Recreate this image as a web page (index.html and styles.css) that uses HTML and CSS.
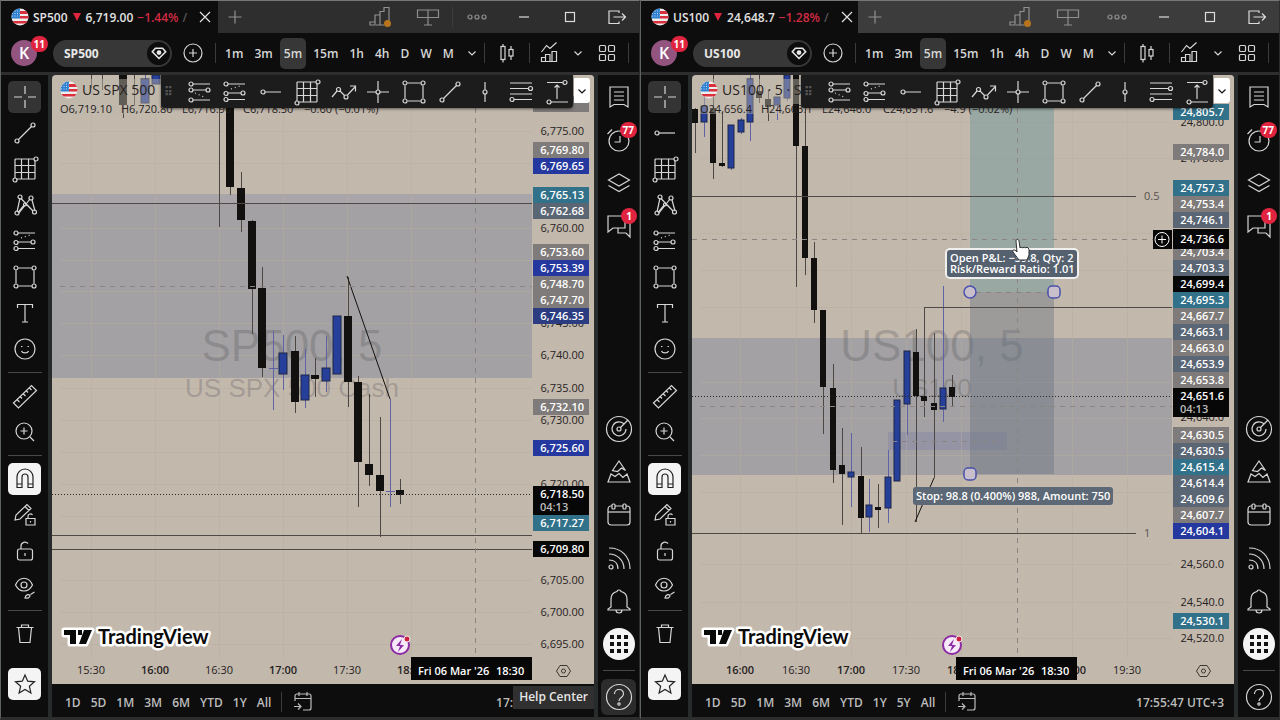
FILE: index.html
```html
<!DOCTYPE html>
<html lang="en">
<head>
    <meta charset="UTF-8">
    <meta name="viewport" content="width=device-width, initial-scale=1.0">
    <title>SP500 / US100</title>
    <link rel="stylesheet" href="styles.css">
</head>
<body>
    <svg class="sprite" aria-hidden="true">
        <symbol id="cross" viewBox="0 0 28 28"><path d="M14 3v8M14 17v8M3 14h8M17 14h8"/></symbol>
        <symbol id="trend" viewBox="0 0 28 28"><circle cx="6" cy="22" r="2"/><circle cx="22" cy="6" r="2"/><path d="M7.5 20.5l13-13"/></symbol>
        <symbol id="hray" viewBox="0 0 28 28"><circle cx="6" cy="14" r="2"/><path d="M8 14h16"/></symbol>
        <symbol id="gann" viewBox="0 0 28 28"><path d="M4 4h19M4 4v19M5 24h19M24 6v18M4 10.500h20M4 17.500h20M10.500 4v20M17.500 4v20"/><circle cx="25" cy="4" r="2"/><circle cx="4" cy="25" r="2"/></symbol>
        <symbol id="pattern" viewBox="0 0 28 28"><path d="M6 21L9 7M10 7.500L22 20M8 22L19 8M21 9l3 11M7 21.500L13 14M15 13l7 7"/><circle cx="9" cy="6" r="2"/><circle cx="20" cy="7" r="2"/><circle cx="6" cy="22" r="2"/><circle cx="23.500" cy="21" r="2"/><circle cx="14" cy="13.500" r="1.500"/></symbol>
        <symbol id="fib" viewBox="0 0 28 28"><circle cx="5" cy="6" r="2"/><path d="M7 6h17M7 15h13M7 21.500h17"/><circle cx="22" cy="15" r="2"/><circle cx="5" cy="15.500" r="2"/><circle cx="5" cy="21.500" r="2"/><path d="M10 11l9-3" stroke-dasharray="1 3"/></symbol>
        <symbol id="fibret" viewBox="0 0 28 28"><circle cx="5" cy="6" r="2"/><circle cx="5" cy="12" r="2"/><circle cx="22" cy="12" r="2"/><circle cx="5" cy="22" r="2"/><path d="M7 6h17M7 12h13M7 22h17"/><path d="M9 15l9 4" stroke-dasharray="1 3"/></symbol>
        <symbol id="box" viewBox="0 0 28 28"><path d="M7.500 5h13M7.500 23h13M5 7.500v13M23 7.500v13"/><circle cx="5" cy="5" r="2"/><circle cx="23" cy="5" r="2"/><circle cx="5" cy="23" r="2"/><circle cx="23" cy="23" r="2"/></symbol>
        <symbol id="type" viewBox="0 0 28 28"><path d="M6.500 9V5.500h15V9M14 5.500V23M11 23h6"/></symbol>
        <symbol id="smile" viewBox="0 0 28 28"><circle cx="14" cy="14" r="10"/><path d="M10 11.500h1.500M16.500 11.500H18M10.500 16c1 2.500 6 2.500 7 0"/></symbol>
        <symbol id="ruler" viewBox="0 0 28 28"><path d="M2.500 21L20.500 3.500l5 5L7.500 26zM6 17.500l2.500 2.500M9 14.500l2 2M12 11.500l2.500 2.500M15 8.500l2 2M18 5.500l2.500 2.500"/></symbol>
        <symbol id="zoomin" viewBox="0 0 28 28"><circle cx="13" cy="13" r="8"/><path d="M19 19l4 4M13 9.500v7M9.500 13h7"/></symbol>
        <symbol id="magnet" viewBox="0 0 28 28"><path d="M6 22.500V12a8 8 0 0 1 16 0v10.500h-5V12a3 3 0 0 0-6 0v10.500zM6 19h5M17 19h5"/></symbol>
        <symbol id="pencil" viewBox="0 0 28 28"><path d="M4 19l1-5L16 3.500l4 4L9 18zM14 5.500l4 4"/><path d="M15 17.500h9v6.500h-9zM17 17.500v-2.500a2.500 2.500 0 0 1 4.500-1M19.500 20v1.500"/></symbol>
        <symbol id="lock" viewBox="0 0 28 28"><rect x="6.500" y="12" width="15" height="11" rx="2"/><path d="M10 12V9a4 4 0 0 1 7-2.500M14 16v3" /></symbol>
        <symbol id="eye" viewBox="0 0 28 28"><path d="M4.500 12c4-9 13-9 17 0-4 8-13 8-17 0z"/><circle cx="13" cy="12" r="3"/><path d="M14 25c1-4 4-4 5-2.500 0 2-2 3-5 2.500zM19.500 21.500l4-2.500"/></symbol>
        <symbol id="trash" viewBox="0 0 28 28"><path d="M5.500 7.500h17M10.500 7V5h7v2M7.500 7.500l1.500 15h10l1.500-15"/></symbol>
        <symbol id="star" viewBox="0 0 28 28"><path d="M14 5l2.700 6.200 6.800.6-5.100 4.500 1.500 6.700L14 19.500 8.100 23l1.500-6.700-5.100-4.500 6.800-.6z"/></symbol>
        <symbol id="wave" viewBox="0 0 28 28"><path d="M3 19l5-6M11 13l5 5M18.500 17L26 9M21 8h5.500v5.500"/><circle cx="9.500" cy="11.500" r="2"/><circle cx="17" cy="19" r="2"/></symbol>
        <symbol id="crossline" viewBox="0 0 28 28"><path d="M14 3v9M14 16v9M3 14h9M16 14h9"/><circle cx="14" cy="14" r="2"/></symbol>
        <symbol id="vline" viewBox="0 0 28 28"><path d="M14 4v8M14 16v8"/><circle cx="14" cy="14" r="2"/></symbol>
        <symbol id="channel" viewBox="0 0 28 28"><path d="M3 5h22M3 10.500h18M3 16h22M7 21.500h18"/><circle cx="23.500" cy="10.500" r="2"/><circle cx="5" cy="21.500" r="2"/></symbol>
        <symbol id="range" viewBox="0 0 28 28"><path d="M4 4.500h16M8 24h17M14 8v13M11.500 9.500L14 7l2.500 2.500"/><circle cx="22" cy="4.500" r="2"/><circle cx="6" cy="24" r="2"/></symbol>
        <symbol id="watch" viewBox="0 0 28 28"><path d="M5 4h18v20l-4-2.500h-10L5 24zM9 9h10M9 13h10M9 17h10"/></symbol>
        <symbol id="alarm" viewBox="0 0 28 28"><circle cx="14" cy="15" r="10"/><path d="M15 10v6H9.500M2.500 8L7 3.500"/></symbol>
        <symbol id="layers" viewBox="0 0 28 28"><path d="M3.500 11L14 5l10.500 6L14 17zM3.500 16.500L14 22.500l10.500-6"/></symbol>
        <symbol id="chat" viewBox="0 0 28 28"><path d="M3 4h17v12H8l-5 4zM20 8h5v17l-4-4h-8v-5"/></symbol>
        <symbol id="radar" viewBox="0 0 28 28"><circle cx="14" cy="14" r="12.500"/><path d="M19.500 9.500a7 7 0 1 0 1.500 4.500M15 13l8-8"/><circle cx="14" cy="14" r="2"/></symbol>
        <symbol id="peak" viewBox="0 0 28 28"><path d="M7.500 12.500L14 3l6.500 9.500-4-2.500-4 3.500zM6 16L3 24h22l-3-8-4 3.500-4-4-4 3z"/></symbol>
        <symbol id="calendar" viewBox="0 0 28 28"><rect x="3" y="5" width="22" height="19" rx="3"/><path d="M3 11h22"/><rect class="peg" x="7" y="3" width="3" height="5" rx="1"/><rect class="peg" x="18" y="3" width="3" height="5" rx="1"/></symbol>
        <symbol id="feed" viewBox="0 0 28 28"><circle cx="6" cy="23" r="2"/><path d="M4 16c5 0 9 3 9 9M4 10c8 0 15 6 15 15M4 4c12 0 21 8 21 21"/></symbol>
        <symbol id="bell" viewBox="0 0 28 28"><path d="M6 20v-8c0-5 4-7 6-7.500 0-2 4-2 4 0 2 .5 6 2.500 6 7.500v8l3 2v1H3v-1zM11 23c0 4 6 4 6 0"/></symbol>
        <symbol id="help" viewBox="0 0 28 28"><circle cx="14" cy="14" r="12.500"/><path d="M9.500 11c0-6 9-6 9 0 0 3.500-4.500 3.500-4.500 7"/><circle cx="14" cy="21" r="1.200"/></symbol>
        <symbol id="plus" viewBox="0 0 28 28"><path d="M14 7.500v13M7.500 14h13"/></symbol>
        <symbol id="pluscircle" viewBox="0 0 28 28"><circle cx="14" cy="14" r="9"/><path d="M14 10v8M10 14h8"/></symbol>
        <symbol id="close" viewBox="0 0 28 28"><path d="M9 9l10 10M19 9L9 19"/></symbol>
        <symbol id="stairs" viewBox="0 0 28 28"><path d="M4 22v-3h5v3zM9 20v-8h5v10h-4M14 13V8.500h4v-4h5V20h-3M14 22h4"/><circle class="dot" cx="21.500" cy="20.500" r="3.500"/></symbol>
        <symbol id="desk" viewBox="0 0 28 28"><path d="M3.500 7h21v7.500h-21zM14 7v15M10 22h8"/></symbol>
        <symbol id="dots" viewBox="0 0 28 28"><circle cx="7" cy="14" r="2"/><circle cx="14" cy="14" r="2"/><circle cx="21" cy="14" r="2"/></symbol>
        <symbol id="min" viewBox="0 0 28 28"><path d="M9 14h10"/></symbol>
        <symbol id="max" viewBox="0 0 28 28"><rect x="9.500" y="9.500" width="9" height="9"/></symbol>
        <symbol id="exit" viewBox="0 0 28 28"><path d="M17 10V8H7v12.500h10v-2M11.500 14H23M20 10.500l3.500 3.500-3.500 3.500"/></symbol>
        <symbol id="down" viewBox="0 0 28 28"><path d="M10.500 12.500L14 16l3.500-3.500"/></symbol>
        <symbol id="bars" viewBox="0 0 28 28"><rect x="8" y="7.500" width="4" height="13"/><rect x="16" y="10.500" width="4" height="6.500"/><path d="M10 5v2.500M10 20.500v3M18 7v3.500M18 17v4"/></symbol>
        <symbol id="indicators" viewBox="0 0 28 28"><path d="M6.500 13l5-6.500 3.500 3 6.500-6M6.500 22.500v-4h4v4zM10.500 22.500v-7h4.500v7zM17 22.500v-10h4.500v10zM6.500 22.500h15"/></symbol>
        <symbol id="layout" viewBox="0 0 28 28"><rect x="6.500" y="6.500" width="6" height="6" rx="1"/><rect x="15.500" y="6.500" width="6" height="6" rx="1"/><rect x="6.500" y="15.500" width="6" height="6" rx="1"/><rect x="15.500" y="15.500" width="6" height="6" rx="1"/></symbol>
        <symbol id="goto" viewBox="0 0 28 28"><path d="M6 13V8a2 2 0 0 1 2-2h12a2 2 0 0 1 2 2v12a2 2 0 0 1-2 2h-6M6 10.500h16M10 4v4M18 4v4M5 18.500h7M9 15.500l3 3-3 3"/></symbol>
        <symbol id="gem" viewBox="0 0 28 28"><path d="M9.500 8h9l4 4.500L14 21l-8.500-8.500z"/><circle class="solid" cx="14" cy="13.500" r="3"/></symbol>
        <symbol id="flag" viewBox="0 0 18 18">
            <clipPath id="round"><circle cx="9" cy="9" r="8.500"/></clipPath>
            <g clip-path="url(#round)" stroke="none">
                <path fill="#f0eded" d="M0 0h18v18H0z"/>
                <path fill="#d8303c" d="M9 3h9v3H9zM9 8h9v2.500H9zM0 13h18v2.500H0z"/>
                <path fill="#2f7fd0" d="M0 0h9v10.500H0z"/>
                <path stroke="#bfe0fa" stroke-dasharray="1 1.500" d="M1 3h8M1 5.500h8M1 8h8"/>
            </g>
        </symbol>
    </svg>

    <main class="desktop" id="desktop"></main>
    <script src="app.js"></script>
</body>
</html>
```
FILE: styles.css
```css
* { box-sizing: border-box; }

body {
    margin: 0;
    background: #2a2a2a;
    color: #d6d6d6;
    font-family: "Open Sans", "Noto Sans", sans-serif;
    font-size: 12px;
    font-weight: 600;
}

button {
    display: inline-flex;
    align-items: center;
    justify-content: center;
    flex: none;
    padding: 0;
    border: 0;
    background: none;
    color: inherit;
    font: inherit;
}

.sprite { position: absolute; width: 0; height: 0; }

.icon {
    display: block;
    flex: none;
    width: 28px;
    height: 28px;
    fill: none;
    stroke: currentColor;
    stroke-width: 1.2;
}
.icon.flag { width: 18px; height: 18px; }
.peg { fill: #0d0d0d; }
.solid { fill: currentColor; stroke: none; }
.dot { fill: #b8741c; stroke: none; }

.desktop {
    display: grid;
    grid-template-columns: 1fr 1fr;
    height: 100vh;
    min-height: 640px;
}

.window {
    display: flex;
    flex-direction: column;
    min-width: 0;
    border: 1px solid #2d2d2d;
    border-top-color: #777;
    border-left-color: #5c6162;
    border-bottom-width: 3px;
    background: #0d0d0d;
}

/* title bar */
.titlebar {
    display: flex;
    align-items: center;
    flex: none;
    height: 32px;
    background: #2e2e2e;
    color: #8f8f8f;
}
.inactive .titlebar { background: #3c3c3c; }
.tab {
    display: flex;
    align-items: center;
    flex: none;
    gap: 4px;
    width: 217px;
    height: 32px;
    padding: 0 0 0 10px;
    background: #0d0d0d;
    color: #e2e2e2;
}
.tab .fall {
    margin: 0 1px;
    border: 4px solid transparent;
    border-top: 8px solid #e0243f;
    border-bottom: 0;
}
.tab .loss { color: #d22a43; }
.tab .rest { flex: 1; color: #555; }
.titlebar .spacer { flex: 1; }
.titlebar .strong { color: #dcdcdc; }
.titlebar .new { width: 34px; }
.titlebar .sysbtn { width: 46px; }
.titlebar .tool { width: 48px; }

.rule { flex: none; width: 1px; height: 20px; background: #3c3c3c; }

/* header */
.header {
    display: flex;
    align-items: center;
    flex: none;
    height: 42px;
    padding: 1px 0 0 10px;
    border-bottom: 3px solid #2e2e2e;
    background: #0d0d0d;
}
.avatar {
    position: relative;
    width: 26px;
    height: 26px;
    border-radius: 50%;
    background: #935480;
    color: #fff;
    font-size: 16px;
}
.badge {
    position: absolute;
    top: -4px;
    right: -11px;
    min-width: 16px;
    padding: 0 3px;
    border-radius: 8px;
    background: #e0243f;
    color: #fff;
    font-size: 10px;
    line-height: 16px;
    font-weight: 700;
    text-align: center;
}
.search {
    justify-content: space-between;
    width: 119px;
    height: 27px;
    margin: 0 7px 0 16px;
    padding: 0 2px 0 11px;
    border-radius: 14px;
    background: #373737;
    color: #e8e8e8;
    font-weight: 700;
}
.search .gem {
    display: flex;
    align-items: center;
    justify-content: center;
    width: 23px;
    height: 23px;
    border-radius: 50%;
    background: #0d0d0d;
}
.search .icon { width: 22px; height: 22px; stroke-width: 2; }
.header > .rule { margin: 0 1px; }
.header > .first { margin: 0 2px 0 8px; }
.header > .end { margin: 0 10px 0 3px; }
.intervals { display: flex; flex: 1; justify-content: space-evenly; }
.intervals button { height: 31px; padding: 0 4px; border-radius: 5px; }
.intervals .on { background: #373737; }
.header .chev { width: 22px; }
.header .wide { width: 36px; }
.header .style { width: 42px; }

/* body */
.body { display: flex; flex: 1; min-height: 0; background: #272b2b; }

.tools {
    display: flex;
    flex-direction: column;
    align-items: center;
    flex: none;
    width: 47px;
    margin-right: 4px;
    padding: 4px 0 15px;
    background: #0d0d0d;
}
.tools button { width: 33px; height: 32px; margin: 2px 0; border-radius: 5px; }
.tools .on { background: #343434; }
.tools .lit { background: #f4f4f4; color: #222; }
.tools hr { flex: none; width: 34px; height: 1px; margin: 5px 0; border: 0; background: #484848; }
.tools .last { margin-top: auto; }

.center { position: relative; display: flex; flex: 1; flex-direction: column; min-width: 0; }

.chart {
    position: relative;
    flex: 1;
    min-height: 0;
    overflow: hidden;
    border-radius: 4px 4px 0 0;
    background: #c2b8ac;
}
.plot { display: block; width: 100%; height: 100%; font-size: 11px; }

.drawbar {
    position: absolute;
    top: 0;
    left: 109px;
    right: 21px;
    display: flex;
    align-items: center;
    justify-content: space-between;
    height: 33px;
    padding: 0 2px 0 3px;
    border-radius: 0 0 4px 4px;
    background: #1c1c1c;
    box-shadow: 0 1px 3px #0008;
}
.drawbar .grip { width: 14px; color: #555; }
.more {
    position: absolute;
    top: 3px;
    right: 4px;
    width: 16px;
    height: 25px;
    border-radius: 0 3px 3px 0;
    background: #fff;
    color: #111;
}

.ranges {
    display: flex;
    align-items: center;
    flex: none;
    height: 33px;
    padding: 3px 10px 0 8px;
    background: #0d0d0d;
    color: #bcbcbc;
}
.ranges button { height: 28px; padding: 0 5px; }
.ranges .rule { margin: 0 2px 0 5px; }
.ranges .clock { margin-left: auto; padding: 0; }
.tip {
    position: absolute;
    right: 0;
    bottom: 8px;
    height: 23px;
    padding: 0 6px;
    background: #303030;
    color: #e6e6e6;
    line-height: 22px;
}

.widgets {
    display: flex;
    flex-direction: column;
    align-items: center;
    flex: none;
    width: 41px;
    margin-left: 4px;
    padding-bottom: 2px;
    background: #0d0d0d;
}
.widgets button { position: relative; width: 35px; height: 43px; }
.widgets .badge { top: 4px; right: -1px; }
.widgets .push { margin-top: auto; }
.widgets hr { flex: none; width: 32px; height: 1px; margin: 5px 0 8px; border: 0; background: #484848; }
.widgets .help { height: 36px; border-radius: 6px; }
.widgets .help.on { background: #2c2c2c; }
.apps {
    display: grid;
    grid-template-columns: repeat(3, 4px);
    gap: 3px;
    place-content: center;
    width: 32px;
    height: 32px;
    border-radius: 50%;
    background: #f4f4f4;
}
.apps i { height: 4px; background: #111; }

/* plot parts */
.grid line { stroke: #b7ada2; }
.zone { fill: #a3a1a3; }
.edge { fill: #aaa5a9; }
.order { fill: #8e8ea4; opacity: .7; }
.profit { fill: #6f9799; opacity: .5; }
.risk { fill: #6a7280; opacity: .42; }
.watermark { fill: #46464d; fill-opacity: .26; font-family: "Liberation Sans", Arial, sans-serif; font-weight: 400; text-anchor: middle; }
.watermark .big { font-size: 44px; }
.watermark .sub { font-size: 26px; }
.wick { stroke: #4c4743; }
.wick.up { stroke: #5f62a5; }
.down { fill: #12110f; }
.up { fill: #263f9b; stroke: #1c2646; }
.line { stroke: #504a46; fill: none; }
.ink { stroke: #14120f; fill: none; }
.dash { stroke: #8a8582; stroke-dasharray: 5 5; }
.dotted { stroke: #2c2926; stroke-dasharray: 1 2; }
.fade { fill: #c2b8ac; opacity: .45; }
.legend { fill: #26221f; font-weight: 400; }
.legend .name { font-size: 14px; }
.axis { fill: #26221f; text-anchor: end; font-weight: 400; }
.time { fill: #26221f; text-anchor: middle; font-weight: 400; }
.time .hour { font-weight: 600; }
.axisbg { fill: #c2b8ac; }
.tag { fill: #fff; font-weight: 600; }
.count { fill: #bdbdbd; }
.gray { fill: #7f7b7a; }
.blue { fill: #2438a0; }
.navy { fill: #2b3c80; }
.teal { fill: #32718a; }
.slate { fill: #5b6675; }
.black { fill: #070707; }
.fib { fill: #57514c; font-weight: 400; }
.handle { fill: #c8bfca; stroke: #4a50ad; stroke-width: 1.5; }
.bubble { fill: #55616f; stroke: #f0efed; stroke-width: 2; }
.stop { fill: #5c6875; }
.boxtext { fill: #fff; }
.ring { fill: none; stroke: #fff; }
.hand { fill: #fff; stroke: #333; }
.event { fill: #f6e9f8; stroke: #8c2ba5; stroke-width: 2; }
.bolt { fill: #8c2ba5; }
.alert { fill: #c8203e; stroke: #f8eef4; }
.gear { fill: none; stroke: #3b3631; }
.logo { fill: #0a0a0a; stroke: #fff; stroke-width: 5; stroke-linejoin: round; paint-order: stroke; font-family: Lato, sans-serif; font-size: 20px; font-weight: 700; }
```
FILE: app.js
```js
// Chart coordinates are in window pixels; the plot group shifts them to the pane.
const windows = [
    {
        symbol: "SP500", price: "6,719.00", change: "−1.44%", cls: "active",
        name: "US SPX 500", sub: "US SPX 500 Cash",
        ohlc: ["O6,719.10", "H6,720.80", "L6,716.90", "C6,718.50", "−0.60 (−0.01%)"],
        second: "trend",
        ranges: ["1D", "5D", "1M", "3M", "6M", "YTD", "1Y", "All"],
        grid: [131, 163, 228, 260, 291, 323, 355, 388, 420, 452, 484, 516, 580, 612, 644],
        times: [["15:30", 91], ["16:00", 155, 1], ["16:30", 219], ["17:00", 283, 1], ["17:30", 347], ["18:00", 411, 1]],
        cursor: 411, event: 400,
        // center, body top, body bottom, wick top, wick bottom, up
        candles: [
            [91, 75, 75, 75, 88], [102, 75, 75, 75, 90], [123, 75, 105, 75, 118], [134, 75, 75, 75, 105],
            [145, 79, 103, 75, 104, 1], [156, 75, 84, 75, 84, 1],
            [219, 108, 108, 108, 227], [230, 108, 187, 108, 195], [241, 188, 220, 172, 232],
            [252, 221, 289, 220, 334], [262, 288, 368, 267, 377], [273, 368, 369, 331, 410, 1],
            [283, 353, 374, 335, 390, 1], [295, 351, 402, 336, 413], [305, 375, 400, 349, 408, 1],
            [315, 375, 379, 358, 397], [326, 368, 381, 336, 392, 1], [337, 316, 374, 316, 374, 1],
            [348, 316, 382, 277, 407], [358, 382, 462, 376, 507], [369, 464, 475, 394, 486],
            [380, 475, 491, 417, 537], [390, 491, 492, 399, 507, 1], [400, 490, 495, 479, 504]
        ],
        width: 8,
        back: `<path class="edge" d="M52 194h480v9H52z"/><path class="zone" d="M52 203h480v175H52z"/>`,
        front: `<path class="line" d="M52 203.500h480M52 535.500h480M52 549.500h480"/>
            <path class="ink" d="M347 276l43 123"/>
            <path class="dash" d="M60 286.500h472M475.500 108v550"/>
            <path class="dotted" d="M52 494.500h480"/>`,
        top: "",
        labels: [
            ["6,775.00", 131], ["6,745.00", 323], ["6,760.00", 228], ["6,740.00", 355], ["6,735.00", 388],
            ["6,730.00", 420], ["6,720.00", 484], ["6,705.00", 580], ["6,700.00", 612], ["6,695.00", 644],
            ["", 104, "gray"], ["6,769.80", 150, "gray"], ["6,769.65", 166, "blue"], ["6,765.13", 195, "teal"],
            ["6,762.68", 211, "slate"], ["6,753.60", 252, "gray"], ["6,753.39", 268, "blue"],
            ["6,748.70", 284, "gray"], ["6,747.70", 300, "gray"], ["6,746.35", 316, "navy"],
            ["6,732.10", 407, "gray"], ["6,725.60", 448, "blue"], ["6,718.50", 494, "black", "04:13"],
            ["6,717.27", 523, "teal"], ["6,709.80", 549, "black"]
        ],
        help: true
    },
    {
        symbol: "US100", price: "24,648.7", change: "−1.28%", cls: "inactive",
        name: "US100 · 5 · S", sub: "US100",
        ohlc: ["O24,656.4", "H24,663.1", "L24,646.0", "C24,651.6", "−4.9 (−0.02%)"],
        second: "hray",
        ranges: ["1D", "5D", "1M", "3M", "6M", "YTD", "1Y", "5Y", "All"],
        grid: [122, 158, 233, 270, 307, 382, 418, 455, 492, 564, 602, 638],
        times: [["16:00", 100, 1], ["16:30", 156], ["17:00", 211, 1], ["17:30", 266], ["18:00", 321, 1], ["19:00", 432, 1], ["19:30", 487]],
        cursor: 316, event: 312,
        candles: [
            [55, 109, 123, 108, 153], [64, 106, 122, 88, 137, 1], [73, 108, 163, 75, 179], [82, 163, 166, 112, 167],
            [91, 125, 168, 125, 170, 1], [101, 120, 132, 118, 134, 1], [110, 79, 122, 75, 141, 1],
            [119, 91, 98, 75, 103], [128, 99, 107, 90, 121], [137, 97, 105, 97, 120, 1], [147, 75, 98, 75, 101, 1],
            [156, 75, 146, 75, 287], [165, 146, 258, 108, 275], [174, 258, 310, 242, 323],
            [183, 310, 387, 310, 434], [193, 388, 470, 364, 483], [202, 465, 474, 428, 525],
            [211, 472, 477, 433, 507, 1], [221, 476, 518, 447, 534], [229, 505, 517, 479, 532, 1],
            [238, 507, 510, 484, 528], [248, 477, 508, 450, 523, 1], [257, 400, 481, 400, 481, 1],
            [267, 351, 404, 351, 435, 1], [276, 352, 396, 329, 522], [284, 396, 401, 308, 417],
            [294, 403, 410, 333, 478], [303, 388, 409, 286, 422, 1], [312, 387, 397, 375, 406]
        ],
        width: 6,
        back: `<path class="zone" d="M52 338h480v137H52z"/><path class="order" d="M248 432h119v18H248z"/>`,
        front: `<path class="profit" d="M330 108h84v184h-84z"/><path class="risk" d="M330 292h84v182h-84z"/>
            <path class="line" d="M52 196.500h444M52 533.500h444M284 307.500h248"/>
            <path class="dash" d="M336 292.500h72"/>
            <path class="ink" d="M275 522l19-44"/>
            <path class="dash" d="M52 239.500h480M60 406.500h472M252 441.500h112M377.500 108v550"/>
            <path class="dotted" d="M52 396.500h480"/>
            <text class="fib" x="504" y="200">0.5</text><text class="fib" x="504" y="537">1</text>`,
        top: `<circle class="handle" cx="330" cy="292" r="6"/>
            <rect class="handle" x="408" y="286" width="12" height="12" rx="4"/>
            <rect class="handle" x="324" y="468" width="12" height="12" rx="4"/>
            <rect class="bubble" x="306" y="249" width="132" height="29" rx="4"/>
            <text class="boxtext" x="310" y="262">Open P&amp;L: −39.8, Qty: 2</text>
            <text class="boxtext" x="310" y="273">Risk/Reward Ratio: 1.01</text>
            <rect class="stop" x="273" y="487" width="200" height="18" rx="3"/>
            <text class="boxtext" x="276" y="500">Stop: 98.8 (0.400%) 988, Amount: 750</text>
            <path class="black" d="M513 230h19v19h-19z"/><circle class="ring" cx="522" cy="239.500" r="7"/>
            <path class="ring" d="M518 239.500h8M522 235.500v8"/>
            <path class="hand" d="M376 241c0-2 3-2 3 0l1 7 1-1 2 1 1-1 2 1 1-1 2 2v6l-2 5h-8l-6-8c-1-2 1-3 3-1l1 1z"/>`,
        labels: [
            ["24,800.0", 122], ["24,780.0", 158], ["24,640.0", 417], ["24,560.0", 564], ["24,540.0", 602], ["24,520.0", 638],
            ["24,805.7", 112, "teal"], ["24,784.0", 152, "gray"], ["24,757.3", 188, "teal"], ["24,753.4", 204, "gray"],
            ["24,746.1", 220, "slate"], ["24,703.4", 252, "gray"], ["24,736.6", 239, "black tall"], ["24,703.3", 268, "slate"],
            ["24,699.4", 284, "black"], ["24,695.3", 300, "teal"], ["24,667.7", 316, "gray"], ["24,663.1", 332, "slate"],
            ["24,663.0", 348, "gray"], ["24,653.9", 364, "slate"], ["24,653.8", 380, "gray"],
            ["24,651.6", 396, "black", "04:13"], ["24,630.5", 435, "gray"], ["24,630.5", 451, "slate"],
            ["24,615.4", 467, "teal"], ["24,614.4", 483, "slate"], ["24,609.6", 499, "slate"],
            ["24,607.7", 515, "gray"], ["24,604.1", 531, "blue"], ["24,530.1", 621, "teal"]
        ],
        help: false
    }
];

const icon = (id, cls = "") => `<svg class="icon ${cls}" aria-hidden="true"><use href="#${id}"/></svg>`;
const button = (id, cls = "", extra = "") => `<button type="button" class="${cls}" aria-label="${id}">${icon(id)}${extra}</button>`;

function candle([x, top, bottom, high, low, up], width) {
    const dir = up ? "up" : "down";
    let body = "";
    if (bottom - top === 1) body = `<path class="wick ${dir}" d="M${x - 4} ${top}.500h9"/>`;
    else if (bottom > top) body = `<rect class="${dir}" x="${x - width / 2}" y="${top}" width="${width}" height="${bottom - top}"/>`;
    return `<path class="wick ${dir}" d="M${x}.500 ${high}V${low}"/>${body}`;
}

function label([text, y, color, count]) {
    if (!color) return `<text class="axis" x="584" y="${y + 4}">${text}</text>`;
    let top = y - 8, height = 16;
    if (count) height = 29;
    if (color.includes("tall")) { top = y - 10; height = 20; }
    return `<rect class="${color}" x="533" y="${top}" width="56" height="${height}"/>
        ${text ? `<text class="axis tag" x="584" y="${y + 4}">${text}</text>` : ""}
        ${count ? `<text class="tag count" x="540" y="${y + 17}">${count}</text>` : ""}`;
}

function plot(w) {
    return `<svg class="plot" role="img" aria-label="${w.name} chart"><g transform="translate(-52 -75)">
        ${w.back}
        <g class="grid" opacity=".5">${w.grid.map(y => `<line x1="60" x2="532" y1="${y}.500" y2="${y}.500"/>`).join("")}
        ${w.times.map(t => `<line x1="${t[1]}.500" x2="${t[1]}.500" y1="75" y2="658"/>`).join("")}</g>
        <g class="watermark"><text class="big" x="292" y="361">${w.symbol}, 5</text><text class="sub" x="292" y="397">${w.sub}</text></g>
        ${w.candles.map(c => candle(c, w.width)).join("")}
        <path class="fade" d="M58 79h103v25h-10v10H58z"/>
        ${w.front}
        <g class="legend"><use href="#flag" x="60" y="81" width="18" height="18"/>
        <text class="name" x="82" y="95">${w.name}</text>
        ${w.ohlc.map((t, i) => `<text x="${60 + i * 61}" y="113">${t}</text>`).join("")}</g>
        <path class="logo" d="M64 630h12v14h-6v-9h-6zM84 630h8l-6 14h-7zM78 630h4v5h-4z"/>
        <text class="logo" x="98" y="644">TradingView</text>
        <g class="time">${w.times.map(t => `<text class="${t[2] ? "hour" : ""}" x="${t[1]}" y="674">${t[0]}</text>`).join("")}</g>
        <circle class="event" cx="${w.event}" cy="645" r="9"/>
        <path class="bolt" d="M${w.event + 2} 639l-6 7h4l-2 6 6-7h-4z"/>
        <circle class="alert" cx="${w.event + 7}" cy="639" r="3"/>
        <path class="black" d="M${w.cursor} 657h121v23H${w.cursor}z"/>
        <text class="tag" x="${w.cursor + 7}" y="675">Fri 06 Mar '26</text><text class="tag" x="${w.cursor + 85}" y="675">18:30</text>
        <path class="axisbg" d="M532 75h62v582h-62z"/>
        ${w.labels.map(label).join("")}
        ${w.top}
        <path class="gear" d="M560 665.500h7l3.500 5.500-3.500 5.500h-7l-3.500-5.500z"/><circle class="gear" cx="563.500" cy="671" r="2"/>
        </g></svg>`;
}

function render(w) {
    const intervals = ["1m", "3m", "5m", "15m", "1h", "4h", "D", "W", "M"];
    const drawings = ["fibret", "fib", "hray", "gann", "wave", "crossline", "box", "trend", "vline", "channel", "range"];
    return `<section class="window ${w.cls}">
        <div class="titlebar">
            <div class="tab">${icon("flag", "flag")}<span>${w.symbol}</span><i class="fall"></i><span>${w.price}</span>
                <span class="loss">${w.change}</span><span class="rest">/</span>${button("close")}</div>
            ${button("plus", "new")}<span class="spacer"></span>
            ${button("stairs", "tool")}${button("desk", "tool")}<i class="rule"></i>
            ${button("dots", "tool")}${button("min", "sysbtn strong")}${button("max", "sysbtn strong")}${button("exit", "sysbtn strong")}
        </div>
        <header class="header">
            <button type="button" class="avatar">K<span class="badge">11</span></button>
            <button type="button" class="search">${w.symbol}<span class="gem">${icon("gem")}</span></button>
            ${button("pluscircle")}<i class="rule first"></i>
            <nav class="intervals">${intervals.map(t => `<button type="button" class="${t === "5m" ? "on" : ""}">${t}</button>`).join("")}</nav>
            ${button("down", "chev")}<i class="rule"></i>${button("bars", "style")}<i class="rule"></i>
            ${button("indicators", "wide")}${button("down", "chev")}${button("layout", "wide")}<i class="rule end"></i>
        </header>
        <div class="body">
            <aside class="tools">
                ${button("cross", "on")}${[w.second, "gann", "pattern", "fib", "box", "type", "smile"].map(i => button(i)).join("")}
                <hr>${button("ruler")}${button("zoomin")}<hr>
                ${button("magnet", "lit")}${button("pencil")}${button("lock")}${button("eye")}<hr>
                ${button("trash")}${button("star", "lit last")}
            </aside>
            <div class="center">
                <div class="chart">${plot(w)}
                    <div class="drawbar"><span class="grip">⠿</span>${drawings.map(i => button(i)).join("")}</div>
                    ${button("down", "more")}
                </div>
                <div class="ranges">${w.ranges.map(t => `<button type="button">${t}</button>`).join("")}
                    <i class="rule"></i>${button("goto")}<button type="button" class="clock">17:55:47 UTC+3</button></div>
                ${w.help ? `<div class="tip" role="tooltip">Help Center</div>` : ""}
            </div>
            <aside class="widgets">
                ${button("watch")}${button("alarm", "", `<span class="badge">77</span>`)}${button("layers")}${button("chat", "", `<span class="badge">1</span>`)}
                ${button("radar", "push")}${["peak", "calendar", "feed", "bell"].map(i => button(i)).join("")}
                <button type="button" aria-label="apps"><span class="apps">${"<i></i>".repeat(9)}</span></button>
                <hr>${button("help", w.help ? "help on" : "help")}
            </aside>
        </div>
    </section>`;
}

document.getElementById("desktop").innerHTML = windows.map(render).join("");
```
